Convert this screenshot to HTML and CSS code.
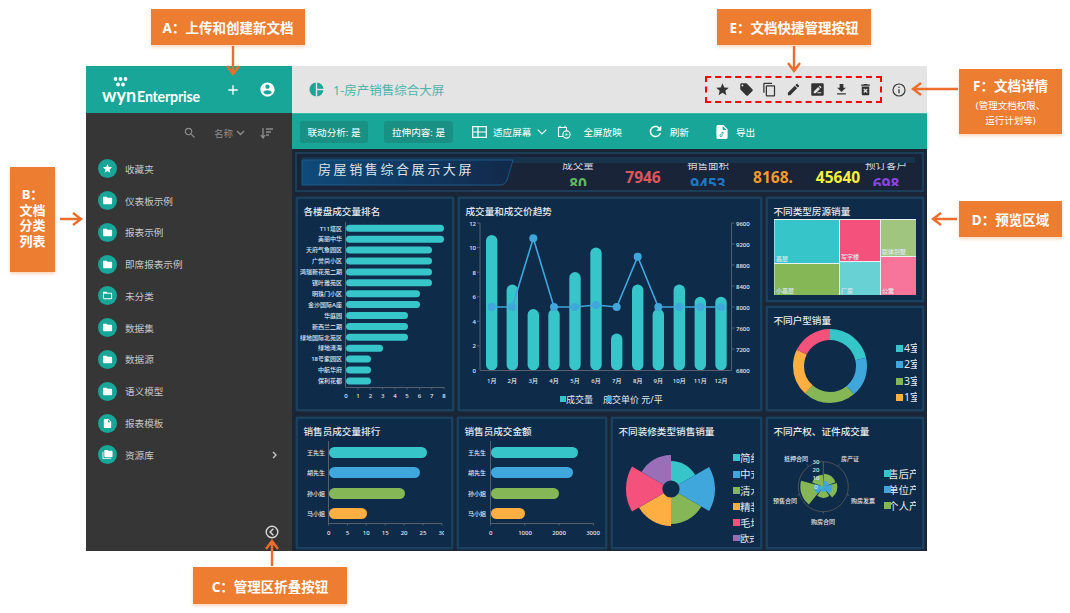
FILE: index.html
```html
<!DOCTYPE html>
<html lang="zh-CN">
<head>
    <meta charset="UTF-8">
    <meta name="viewport" content="width=device-width, initial-scale=1.0">
    <title>文档门户说明</title>
    <link rel="stylesheet" href="styles.css">
</head>
<body>
<svg class="defs" width="0" height="0">
    <symbol id="i-star" viewBox="0 0 24 24"><path d="M12 17.27L18.18 21l-1.64-7.03L22 9.24l-7.19-.61L12 2 9.19 8.63 2 9.24l5.46 4.73L5.82 21z"/></symbol>
    <symbol id="i-folder" viewBox="0 0 24 24"><path d="M10 4H4c-1.1 0-2 .9-2 2v12c0 1.1.9 2 2 2h16c1.1 0 2-.9 2-2V8c0-1.1-.9-2-2-2h-8l-2-2z"/></symbol>
    <symbol id="i-folder-open" viewBox="0 0 24 24"><path d="M20 6h-8l-2-2H4c-1.1 0-1.99.9-1.99 2L2 18c0 1.1.9 2 2 2h16c1.1 0 2-.9 2-2V8c0-1.1-.9-2-2-2zm0 12H4V8h16v10z"/></symbol>
    <symbol id="i-doc" viewBox="0 0 24 24"><path d="M14 2H6c-1.1 0-1.99.9-1.99 2L4 20c0 1.1.89 2 1.99 2H18c1.1 0 2-.9 2-2V8l-6-6zm-1 7V3.5L18.5 9H13z"/></symbol>
    <symbol id="i-folders" viewBox="0 0 24 24"><path d="M3 6H1v14c0 1.1.9 2 2 2h17v-2H3V6zM21 4h-7l-2-2H7c-1.1 0-2 .9-2 2v12c0 1.1.9 2 2 2h14c1.1 0 2-.9 2-2V6c0-1.1-.9-2-2-2z"/></symbol>
</svg>

<div class="app">
    <aside class="sidebar">
        <div class="brand">
            <div class="logo">
                <svg class="logo-dots" width="15" height="10" viewBox="0 0 15 10">
                    <circle cx="2.5" cy="2" r="1.9"/><circle cx="7.5" cy="2" r="1.9"/><circle cx="12.5" cy="2" r="1.9"/>
                    <circle cx="5" cy="7.5" r="1.9"/><circle cx="10" cy="7.5" r="1.9"/>
                </svg>
                <span class="logo-wyn">wyn</span><span class="logo-name">Enterprise</span>
            </div>
            <svg class="brand-add" width="16" height="16" viewBox="0 0 24 24"><path d="M19 13h-6v6h-2v-6H5v-2h6V5h2v6h6v2z"/></svg>
            <svg class="brand-user" width="17" height="17" viewBox="0 0 24 24"><path d="M12 2C6.48 2 2 6.48 2 12s4.48 10 10 10 10-4.48 10-10S17.52 2 12 2zm0 3c1.66 0 3 1.34 3 3s-1.34 3-3 3-3-1.34-3-3 1.34-3 3-3zm0 14.2c-2.5 0-4.71-1.28-6-3.22.03-1.99 4-3.08 6-3.08 1.99 0 5.97 1.09 6 3.08-1.29 1.94-3.5 3.22-6 3.22z"/></svg>
        </div>
        <div class="filter">
            <svg width="14" height="14" viewBox="0 0 24 24"><path d="M15.5 14h-.79l-.28-.27C15.41 12.59 16 11.11 16 9.5 16 5.91 13.09 3 9.5 3S3 5.91 3 9.5 5.91 16 9.5 16c1.61 0 3.09-.59 4.23-1.57l.27.28v.79l5 4.99L20.49 19l-4.99-5zm-6 0C7.01 14 5 11.99 5 9.5S7.01 5 9.5 5 14 7.01 14 9.5 11.99 14 9.5 14z"/></svg>
            <span class="filter-name">名称</span>
            <svg class="filter-chev" width="9" height="6" viewBox="0 0 9 6"><path d="M1 1l3.5 3.5L8 1" fill="none" stroke="#8d8d8d" stroke-width="1.4"/></svg>
            <svg class="filter-sort" width="13" height="11" viewBox="0 0 13 11"><path d="M3 0v9M1 7l2 3 2-3M6 1h7M6 4h5M6 7h3" fill="none" stroke="#8d8d8d" stroke-width="1.3"/></svg>
        </div>
        <ul class="nav">
            <li><span class="nav-dot"><svg><use href="#i-star"/></svg></span>收藏夹</li>
            <li><span class="nav-dot"><svg><use href="#i-folder"/></svg></span>仪表板示例</li>
            <li><span class="nav-dot"><svg><use href="#i-folder"/></svg></span>报表示例</li>
            <li><span class="nav-dot"><svg><use href="#i-folder"/></svg></span>即席报表示例</li>
            <li><span class="nav-dot"><svg><use href="#i-folder-open"/></svg></span>未分类</li>
            <li><span class="nav-dot"><svg><use href="#i-folder"/></svg></span>数据集</li>
            <li><span class="nav-dot"><svg><use href="#i-folder"/></svg></span>数据源</li>
            <li><span class="nav-dot"><svg><use href="#i-folder"/></svg></span>语义模型</li>
            <li><span class="nav-dot"><svg><use href="#i-doc"/></svg></span>报表模板</li>
            <li><span class="nav-dot"><svg><use href="#i-folders"/></svg></span>资源库
                <svg class="nav-more" width="6" height="8" viewBox="0 0 6 8"><path d="M1 1l3 3-3 3" fill="none" stroke="#c8c8c8" stroke-width="1.4"/></svg>
            </li>
        </ul>
        <svg class="collapse" width="14" height="14" viewBox="0 0 14 14"><circle cx="7" cy="7" r="5.8" fill="none" stroke="#d8d8d8" stroke-width="1.4"/><path d="M8.3 3.8L5.1 7l3.2 3.2" fill="none" stroke="#d8d8d8" stroke-width="1.5"/></svg>
    </aside>

    <main class="main">
        <header class="topbar">
            <svg class="doc-icon" width="15" height="15" viewBox="0 0 15 15"><circle cx="7.5" cy="7.5" r="7" fill="#17a697"/><path d="M7.5 0v15M7.5 7.5H15" stroke="#e4e4e4" stroke-width="1.4"/></svg>
            <span class="doc-title">1-房产销售综合大屏</span>
            <div class="quick">
                <svg><use href="#i-star"/></svg>
                <svg viewBox="0 0 24 24"><path d="M21.41 11.58l-9-9C12.05 2.22 11.55 2 11 2H4c-1.1 0-2 .9-2 2v7c0 .55.22 1.05.59 1.42l9 9c.36.36.86.58 1.41.58.55 0 1.05-.22 1.41-.59l7-7c.37-.36.59-.86.59-1.41 0-.55-.23-1.06-.59-1.42zM5.5 7C4.67 7 4 6.33 4 5.5S4.67 4 5.5 4 7 4.67 7 5.5 6.33 7 5.5 7z"/></svg>
                <svg viewBox="0 0 24 24"><path d="M16 1H4c-1.1 0-2 .9-2 2v14h2V3h12V1zm3 4H8c-1.1 0-2 .9-2 2v14c0 1.1.9 2 2 2h11c1.1 0 2-.9 2-2V7c0-1.1-.9-2-2-2zm0 16H8V7h11v14z"/></svg>
                <svg viewBox="0 0 24 24"><path d="M3 17.25V21h3.75L17.81 9.94l-3.75-3.75L3 17.25zM20.71 7.04c.39-.39.39-1.02 0-1.41l-2.34-2.34c-.39-.39-1.02-.39-1.41 0l-1.83 1.83 3.75 3.75 1.83-1.83z"/></svg>
                <svg viewBox="0 0 24 24"><path d="M4 2h16c1.1 0 2 .9 2 2v16c0 1.1-.9 2-2 2H4c-1.1 0-2-.9-2-2V4c0-1.1.9-2 2-2zm2 13v3h3l7-7-3-3-7 7zm11-5l1.5-1.5-3-3L14 7l3 3zM11 18h7v-1.6h-5.4L11 18z" fill-rule="evenodd"/></svg>
                <svg viewBox="0 0 24 24"><path d="M19 9h-4V3H9v6H5l7 7 7-7zM5 18v2h14v-2H5z"/></svg>
                <svg viewBox="0 0 24 24"><path d="M6 19c0 1.1.9 2 2 2h8c1.1 0 2-.9 2-2V7H6v12zm2.46-7.12l1.41-1.41L12 12.59l2.12-2.12 1.41 1.41L13.41 14l2.12 2.12-1.41 1.41L12 15.41l-2.12 2.12-1.41-1.41L10.59 14l-2.13-2.12zM15.5 4l-1-1h-5l-1 1H5v2h14V4z"/></svg>
            </div>
            <svg class="info" width="14" height="14" viewBox="0 0 14 14"><circle cx="7" cy="7" r="6" fill="none" stroke="#3a3a3a" stroke-width="1.2"/><path d="M7 6.2v4M7 3.8v1.3" stroke="#3a3a3a" stroke-width="1.3"/></svg>
        </header>

        <div class="toolbar">
            <span class="pill">联动分析: 是</span>
            <span class="pill pill-next">拉伸内容: 是</span>
            <span class="tool tool-fit">
                <svg width="15" height="12" viewBox="0 0 15 12"><path d="M.7.7h13.6v10.6H.7zM.7 6h13.6M6 .7v10.6" fill="none" stroke="#fff" stroke-width="1.2"/></svg>
                适应屏幕
                <svg width="10" height="6" viewBox="0 0 10 6"><path d="M.7.7L5 5l4.3-4.3" fill="none" stroke="#fff" stroke-width="1.1"/></svg>
            </span>
            <span class="tool tool-full">
                <svg width="14" height="14" viewBox="0 0 14 14"><path d="M6 11.5H1.5V2.5h8v3M3 2.5V.8M8 2.5V.8" fill="none" stroke="#fff" stroke-width="1.1"/><circle cx="9.5" cy="9.5" r="3.6" fill="none" stroke="#fff" stroke-width="1.1"/><path d="M8.6 8v3l2.3-1.5z" fill="#fff"/></svg>
                全屏放映
            </span>
            <span class="tool">
                <svg width="13" height="13" viewBox="3 3 18 18"><path fill="#fff" d="M17.65 6.35C16.2 4.9 14.21 4 12 4c-4.42 0-7.99 3.58-7.99 8s3.57 8 7.99 8c3.73 0 6.84-2.55 7.73-6h-2.08c-.82 2.33-3.04 4-5.65 4-3.31 0-6-2.69-6-6s2.69-6 6-6c1.66 0 3.14.69 4.22 1.78L13 11h7V4l-2.35 2.35z"/></svg>
                刷新
            </span>
            <span class="tool">
                <svg width="12" height="14" viewBox="4 2 16 20"><path fill="#fff" d="M14 2H6c-1.1 0-1.99.9-1.99 2L4 20c0 1.1.89 2 1.99 2H18c1.1 0 2-.9 2-2V8l-6-6zm-1 7V3.5L18.5 9H13z"/><path d="M12 12v5a1.5 1.5 0 1 1-1.5-1.5M12 12.5l2.5 1" fill="none" stroke="#17a697" stroke-width="1.3"/></svg>
                导出
            </span>
        </div>

        <section class="preview">
            <svg class="banner" viewBox="295 152 629 40">
                <defs>
                    <linearGradient id="bannerFill" x1="0" x2="1" y1="0" y2="0"><stop offset="0" stop-color="#0f4a7a"/><stop offset="1" stop-color="#12294a"/></linearGradient>
                    <clipPath id="kpiClip"><rect x="515" y="163" width="400" height="23"/></clipPath>
                </defs>
                <rect x="296" y="153" width="627" height="38" class="banner-frame"/>
                <rect x="302" y="157" width="613" height="6" fill="#17344f"/>
                <path d="M302 160H513L507 180Q505 185 500 185H302Z" fill="url(#bannerFill)" stroke="#1a5a88"/>
                <text x="318" y="174" class="banner-title">房屋销售综合展示大屏</text>
                <g clip-path="url(#kpiClip)">
                    <text x="578" y="169" class="kpi-label">成交量</text>
                    <text x="578" y="190" class="kpi-num" fill="#5fb760">80</text>
                    <text x="643" y="183" class="kpi-num" fill="#e0565c">7946</text>
                    <text x="708" y="169" class="kpi-label">销售面积</text>
                    <text x="708" y="190" class="kpi-num" fill="#1e78c8">9453</text>
                    <text x="773" y="183" class="kpi-num" fill="#f39a2b">8168.</text>
                    <text x="838" y="183" class="kpi-num" fill="#f6f03c">45640</text>
                    <text x="886" y="169" class="kpi-label">预订客户</text>
                    <text x="886" y="190" class="kpi-num" fill="#8a46e0">698</text>
                </g>
            </svg>

            <div class="row-top">
                <div class="panel">
                    <h3>各楼盘成交量排名</h3>
                    <svg class="plot" viewBox="298 219 154 190">
                        <g class="bars-teal">
                            <rect x="346" y="224.8" width="98" height="7" rx="3.5"/><rect x="346" y="235.7" width="98" height="7" rx="3.5"/>
                            <rect x="346" y="246.6" width="86" height="7" rx="3.5"/><rect x="346" y="257.5" width="86" height="7" rx="3.5"/>
                            <rect x="346" y="268.4" width="86" height="7" rx="3.5"/><rect x="346" y="279.3" width="86" height="7" rx="3.5"/>
                            <rect x="346" y="290.2" width="74" height="7" rx="3.5"/><rect x="346" y="301.1" width="74" height="7" rx="3.5"/>
                            <rect x="346" y="312" width="62" height="7" rx="3.5"/><rect x="346" y="322.9" width="62" height="7" rx="3.5"/>
                            <rect x="346" y="333.8" width="62" height="7" rx="3.5"/><rect x="346" y="344.7" width="37" height="7" rx="3.5"/>
                            <rect x="346" y="355.6" width="25" height="7" rx="3.5"/><rect x="346" y="366.5" width="25" height="7" rx="3.5"/>
                            <rect x="346" y="377.4" width="25" height="7" rx="3.5"/>
                        </g>
                        <path class="axis" d="M345.5 222V387.5H444M358 387.5v2M370.3 387.5v2M382.6 387.5v2M394.9 387.5v2M407.2 387.5v2M419.5 387.5v2M431.8 387.5v2M444 387.5v2"/>
                        <g class="lbl-end">
                            <text x="342" y="230.5">T11塔区</text><text x="342" y="241.4">美丽中华</text><text x="342" y="252.3">天府气象园区</text>
                            <text x="342" y="263.2">广誉尚小区</text><text x="342" y="274.1">鸿瑞新花苑二期</text><text x="342" y="285">锦叶雅苑区</text>
                            <text x="342" y="295.9">明珠门小区</text><text x="342" y="306.8">金沙国际A座</text><text x="342" y="317.7">华庭园</text>
                            <text x="342" y="328.6">新西兰二期</text><text x="342" y="339.5">绿地国际北苑区</text><text x="342" y="350.4">绿地湾海</text>
                            <text x="342" y="361.3">18号家园区</text><text x="342" y="372.2">中航华府</text><text x="342" y="383.1">保利花都</text>
                        </g>
                        <g class="lbl-mid">
                            <text x="346" y="398">0</text><text x="358" y="398">1</text><text x="370.5" y="398">2</text><text x="382.6" y="398">3</text><text x="395" y="398">4</text>
                            <text x="407" y="398">5</text><text x="419.5" y="398">6</text><text x="431.8" y="398">7</text><text x="444" y="398">8</text>
                        </g>
                    </svg>
                </div>

                <div class="panel">
                    <h3>成交量和成交价趋势</h3>
                    <svg class="plot" viewBox="460 219 300 190">
                        <g class="bars-teal">
                            <rect x="486" y="235" width="11.4" height="135.5" rx="5.7"/><rect x="506.6" y="284.5" width="11.4" height="86" rx="5.7"/>
                            <rect x="527.6" y="309" width="11.4" height="61.5" rx="5.7"/><rect x="548.3" y="309" width="11.4" height="61.5" rx="5.7"/>
                            <rect x="569.3" y="272" width="11.4" height="98.5" rx="5.7"/><rect x="590.3" y="247.5" width="11.4" height="123" rx="5.7"/>
                            <rect x="611" y="333.6" width="11.4" height="36.9" rx="5.7"/><rect x="632" y="284.5" width="11.4" height="86" rx="5.7"/>
                            <rect x="652.6" y="309" width="11.4" height="61.5" rx="5.7"/><rect x="673.6" y="284.5" width="11.4" height="86" rx="5.7"/>
                            <rect x="694.6" y="296.8" width="11.4" height="73.7" rx="5.7"/><rect x="715.3" y="296.8" width="11.4" height="73.7" rx="5.7"/>
                        </g>
                        <path class="axis" d="M480 223V370.5H731.5V223M477 223h3M477 247.6h3M477 272.2h3M477 296.8h3M477 321.3h3M477 345.9h3M731.5 223h3M731.5 244h3M731.5 265h3M731.5 286h3M731.5 307h3M731.5 328h3M731.5 349h3"/>
                        <polyline class="line" points="491.7,307 512.3,307 533.3,238.3 554,307 575,307 596,305 616.7,307 637.7,256.7 658.3,307 679.3,307 700.3,307 721,307"/>
                        <g class="dots">
                            <circle cx="491.7" cy="307" r="4"/><circle cx="512.3" cy="307" r="4"/><circle cx="533.3" cy="238.3" r="4"/><circle cx="554" cy="307" r="4"/>
                            <circle cx="575" cy="307" r="4"/><circle cx="596" cy="305" r="4"/><circle cx="616.7" cy="307" r="4"/><circle cx="637.7" cy="256.7" r="4"/>
                            <circle cx="658.3" cy="307" r="4"/><circle cx="679.3" cy="307" r="4"/><circle cx="700.3" cy="307" r="4"/><circle cx="721" cy="307" r="4"/>
                        </g>
                        <g class="lbl-end">
                            <text x="476" y="225.5">12</text><text x="476" y="250">10</text><text x="476" y="274.7">8</text><text x="476" y="299.3">6</text>
                            <text x="476" y="323.8">4</text><text x="476" y="348.4">2</text><text x="476" y="373">0</text>
                        </g>
                        <g class="lbl-start">
                            <text x="736" y="225.5">9600</text><text x="736" y="246.5">9200</text><text x="736" y="267.5">8800</text><text x="736" y="288.5">8400</text>
                            <text x="736" y="309.5">8000</text><text x="736" y="330.5">7600</text><text x="736" y="351.5">7200</text><text x="736" y="373">6800</text>
                        </g>
                        <g class="lbl-mid">
                            <text x="491.7" y="383">1月</text><text x="512.3" y="383">2月</text><text x="533.3" y="383">3月</text><text x="554" y="383">4月</text>
                            <text x="575" y="383">5月</text><text x="596" y="383">6月</text><text x="616.7" y="383">7月</text><text x="637.7" y="383">8月</text>
                            <text x="658.3" y="383">9月</text><text x="679.3" y="383">10月</text><text x="700.3" y="383">11月</text><text x="721" y="383">12月</text>
                        </g>
                        <rect x="560" y="396" width="6" height="6" fill="#36c6c9"/>
                        <text x="566" y="403" class="legend-sm">成交量</text>
                        <text x="603" y="403" class="legend-sm">成交单价 元/平</text>
                        <circle cx="609" cy="399" r="3" fill="#3fa7dc"/>
                    </svg>
                </div>

                <div class="stack">
                    <div class="panel">
                        <h3>不同类型房源销量</h3>
                        <svg class="plot" viewBox="768 219 154 81">
                            <rect x="774" y="219" width="142" height="76" fill="#e8f2f2"/>
                            <rect x="774.5" y="220" width="64.5" height="43" fill="#36c6c9"/>
                            <rect x="840" y="220" width="40" height="41" fill="#f4527c"/>
                            <rect x="881" y="220" width="35" height="36" fill="#a0c57e"/>
                            <rect x="774.5" y="264" width="64.5" height="31" fill="#86b757"/>
                            <rect x="840" y="262" width="40" height="33" fill="#67d1d4"/>
                            <rect x="881" y="257" width="35" height="38" fill="#f7749b"/>
                            <g class="lbl-start">
                                <text x="776" y="261">高层</text><text x="841" y="259">写字楼</text><text x="882" y="254">联体别墅</text>
                                <text x="776" y="293">小高层</text><text x="841" y="293">厂房</text><text x="882" y="293">公寓</text>
                            </g>
                        </svg>
                    </div>
                    <div class="panel">
                        <h3>不同户型销量</h3>
                        <svg class="plot" viewBox="768 328 154 81">
                            <defs><clipPath id="unitClip"><rect x="768" y="328" width="149" height="81"/></clipPath></defs>
                            <g transform="rotate(-90 830 366)" fill="none" stroke-width="11">
                                <circle cx="830" cy="366" r="31.5" pathLength="360" stroke="#36c6c9" stroke-dasharray="77 283"/>
                                <circle cx="830" cy="366" r="31.5" pathLength="360" stroke="#3fa7dc" stroke-dasharray="63 297" stroke-dashoffset="-77"/>
                                <circle cx="830" cy="366" r="31.5" pathLength="360" stroke="#86b757" stroke-dasharray="82 278" stroke-dashoffset="-140"/>
                                <circle cx="830" cy="366" r="31.5" pathLength="360" stroke="#ffae42" stroke-dasharray="74 286" stroke-dashoffset="-222"/>
                                <circle cx="830" cy="366" r="31.5" pathLength="360" stroke="#f4527c" stroke-dasharray="64 296" stroke-dashoffset="-296"/>
                            </g>
                            <g clip-path="url(#unitClip)" class="legend">
                                <rect x="896" y="345" width="7" height="7" fill="#36c6c9"/><text x="904" y="352">4室</text>
                                <rect x="896" y="361" width="7" height="7" fill="#3fa7dc"/><text x="904" y="368">2室</text>
                                <rect x="896" y="378" width="7" height="7" fill="#86b757"/><text x="904" y="385">3室</text>
                                <rect x="896" y="394" width="7" height="7" fill="#ffae42"/><text x="904" y="401">1室</text>
                            </g>
                        </svg>
                    </div>
                </div>
            </div>

            <div class="row-bottom">
                <div class="panel">
                    <h3>销售员成交量排行</h3>
                    <svg class="plot" viewBox="298 439 153 108">
                        <defs><clipPath id="tickClip"><rect x="298" y="525" width="146" height="14"/></clipPath></defs>
                        <rect x="329" y="447" width="98" height="11" rx="5.5" fill="#36c6c9"/>
                        <rect x="329" y="467" width="91" height="11" rx="5.5" fill="#3fa7dc"/>
                        <rect x="329" y="488" width="76" height="11" rx="5.5" fill="#86b757"/>
                        <rect x="329" y="508" width="38" height="11" rx="5.5" fill="#ffae42"/>
                        <path class="axis" d="M328.5 441V523.5H442M328.5 523.5v2M347.4 523.5v2M366.3 523.5v2M385.2 523.5v2M404.1 523.5v2M423 523.5v2M442 523.5v2"/>
                        <g class="lbl-end">
                            <text x="325" y="455">王先生</text><text x="325" y="475">胡先生</text><text x="325" y="496">孙小姐</text><text x="325" y="516">马小姐</text>
                        </g>
                        <g class="lbl-mid" clip-path="url(#tickClip)">
                            <text x="328.7" y="535">0</text><text x="347.4" y="535">5</text><text x="366.3" y="535">10</text><text x="385.2" y="535">15</text><text x="404.1" y="535">20</text><text x="423" y="535">25</text><text x="442" y="535">30</text>
                        </g>
                    </svg>
                </div>
                <div class="panel">
                    <h3>销售员成交金额</h3>
                    <svg class="plot" viewBox="459 439 146 108">
                        <rect x="491" y="447" width="87" height="11" rx="5.5" fill="#36c6c9"/>
                        <rect x="491" y="467" width="82" height="11" rx="5.5" fill="#3fa7dc"/>
                        <rect x="491" y="488" width="68" height="11" rx="5.5" fill="#86b757"/>
                        <rect x="491" y="508" width="34" height="11" rx="5.5" fill="#ffae42"/>
                        <path class="axis" d="M490.5 441V523.5H593.5M490.5 523.5v2M524.7 523.5v2M559 523.5v2M593.5 523.5v2"/>
                        <g class="lbl-end">
                            <text x="486" y="455">王先生</text><text x="486" y="475">胡先生</text><text x="486" y="496">孙小姐</text><text x="486" y="516">马小姐</text>
                        </g>
                        <g class="lbl-mid">
                            <text x="490.7" y="535">0</text><text x="525" y="535">1000</text><text x="559" y="535">2000</text><text x="593" y="535">3000</text>
                        </g>
                    </svg>
                </div>
                <div class="panel">
                    <h3>不同装修类型销售销量</h3>
                    <svg class="plot" viewBox="613 439 147 108">
                        <defs><clipPath id="decoClip"><rect x="613" y="439" width="141" height="108"/></clipPath></defs>
                        <path d="M671 489V461A28 28 0 0 1 695.2 475Z" fill="#36c6c9"/>
                        <path d="M671 489L709.1 467A44 44 0 0 1 709.1 511Z" fill="#3fa7dc"/>
                        <path d="M671 489L701.3 506.5A35 35 0 0 1 671 524Z" fill="#86b757"/>
                        <path d="M671 489V526A37 37 0 0 1 639 507.5Z" fill="#ffae42"/>
                        <path d="M671 489L632 511.5A45 45 0 0 1 632 466.5Z" fill="#f4527c"/>
                        <path d="M671 489L641.6 472A34 34 0 0 1 671 455Z" fill="#9b6fb8"/>
                        <circle cx="671" cy="489" r="8.6" class="hole"/>
                        <g clip-path="url(#decoClip)" class="legend">
                            <rect x="733" y="454" width="7" height="7" fill="#36c6c9"/><text x="740" y="462">简约</text>
                            <rect x="733" y="471" width="7" height="7" fill="#3fa7dc"/><text x="740" y="478">中式</text>
                            <rect x="733" y="487" width="7" height="7" fill="#86b757"/><text x="740" y="495">清水</text>
                            <rect x="733" y="503" width="7" height="7" fill="#ffae42"/><text x="740" y="511">精装</text>
                            <rect x="733" y="519" width="7" height="7" fill="#f4527c"/><text x="740" y="527">毛坯</text>
                            <rect x="733" y="535" width="7" height="6" fill="#9b6fb8"/><text x="740" y="542" class="legend-sm">欧式</text>
                        </g>
                    </svg>
                </div>
                <div class="panel">
                    <h3>不同产权、证件成交量</h3>
                    <svg class="plot" viewBox="768 439 154 108">
                        <defs><clipPath id="rightClip"><rect x="768" y="439" width="148" height="108"/></clipPath></defs>
                        <circle cx="823.3" cy="486.7" r="25" class="ring"/>
                        <path class="axis" d="M823.3 486.7V461.7M838 466.5l1.5-2M847 494.5l2 .6M823.3 511.7v2M799.5 494.5l-2 .6M808.6 466.5l-1.5-2"/>
                        <g transform="translate(823.3 486.7)" fill="none">
                            <circle r="6.5" stroke-width="13" pathLength="360" stroke="#86b757" stroke-dasharray="66 294" transform="rotate(-87)"/>
                            <circle r="7" stroke-width="14" pathLength="360" stroke="#86b757" stroke-dasharray="66 294" transform="rotate(-15)"/>
                            <circle r="5.5" stroke-width="11" pathLength="360" stroke="#86b757" stroke-dasharray="66 294" transform="rotate(57)"/>
                            <circle r="11.5" stroke-width="23" pathLength="360" stroke="#86b757" stroke-dasharray="66 294" transform="rotate(129)"/>
                            <circle r="6" stroke-width="12" pathLength="360" stroke="#86b757" stroke-dasharray="66 294" transform="rotate(201)"/>
                            <circle r="3" stroke-width="6" pathLength="360" stroke="#3fa7dc" stroke-dasharray="66 294" transform="rotate(-87)"/>
                            <circle r="4.5" stroke-width="9" pathLength="360" stroke="#3fa7dc" stroke-dasharray="66 294" transform="rotate(-15)"/>
                            <circle r="2.5" stroke-width="5" pathLength="360" stroke="#3fa7dc" stroke-dasharray="66 294" transform="rotate(57)"/>
                            <circle r="4.5" stroke-width="9" pathLength="360" stroke="#3fa7dc" stroke-dasharray="66 294" transform="rotate(129)"/>
                            <circle r="1.5" stroke-width="3" pathLength="360" stroke="#36c6c9" stroke-dasharray="66 294" transform="rotate(129)"/>
                        </g>
                        <g class="lbl-mid">
                            <text x="816" y="464">30</text><text x="816" y="472">20</text><text x="816" y="480">10</text><text x="816" y="489">0</text>
                            <text x="796" y="461">抵押合同</text><text x="850" y="461">房产证</text><text x="863" y="503">购房发票</text>
                            <text x="823" y="524">购房合同</text><text x="785" y="503">预售合同</text>
                        </g>
                        <g clip-path="url(#rightClip)" class="legend">
                            <text x="888" y="478">售后产权</text><rect x="884" y="470" width="7" height="7" fill="#36c6c9"/>
                            <text x="888" y="494">单位产权</text><rect x="884" y="486" width="7" height="7" fill="#3fa7dc"/>
                            <text x="888" y="510">个人产权</text><rect x="884" y="502" width="7" height="7" fill="#86b757"/>
                        </g>
                    </svg>
                </div>
            </div>
        </section>
    </main>
</div>

<!-- callouts sit on top of the screenshot -->
<div class="note note-a">A：上传和创建新文档</div>
<div class="note note-e">E：文档快捷管理按钮</div>
<div class="note note-f">F：文档详情<small>(管理文档权限、<br>运行计划等)</small></div>
<div class="note note-d">D：预览区域</div>
<div class="note note-b">B：<br>文档<br>分类<br>列表</div>
<div class="note note-c">C：管理区折叠按钮</div>

<svg class="arrows" width="1070" height="613" viewBox="0 0 1070 613">
    <path d="M233 46V74M227 66l6 8 6-8"/>
    <path d="M794 46V71M788 63l6 8 6-8"/>
    <path d="M958 89H913M921 83l-8 6 8 6"/>
    <path d="M957 219H933M941 213l-8 6 8 6"/>
    <path d="M60 219H81M73 213l8 6-8 6"/>
    <path d="M272 566V541M266 549l6-8 6 8"/>
</svg>
</body>
</html>
```

FILE: styles.css
```css
* { box-sizing: border-box; }
html, body { margin: 0; padding: 0; }
body {
    position: relative;
    width: 1070px;
    height: 613px;
    overflow: hidden;
    background: #fff;
    font-family: "Noto Sans", "Noto Sans CJK SC", sans-serif;
}
.defs { position: absolute; }

.app { display: flex; width: 841px; height: 485px; margin: 66px 0 0 86px; }

/* left column */
.sidebar { display: flex; flex-direction: column; width: 206px; background: #363636; color: #c6c6c6; font-size: 9.6px; }
.brand { display: flex; align-items: center; height: 47px; background: #17a697; fill: #fff; padding-left: 16px; }
.logo { position: relative; display: flex; align-items: baseline; width: 95px; color: #fff; font-family: Lato, sans-serif; padding-top: 6px; }
.logo-dots { position: absolute; left: 11px; top: 4px; fill: #fff; }
.logo-wyn { font-size: 18px; font-weight: 700; margin-top: 5px; }
.logo-name { font-size: 14.2px; font-weight: 700; margin-left: 1px; letter-spacing: -.2px; }
.brand-add { margin-left: 28px; }
.brand-user { margin-left: 18px; }

.filter { display: flex; align-items: center; height: 40px; padding-left: 97px; fill: #8d8d8d; color: #8d8d8d; }
.filter-name { margin-left: 17px; }
.filter-chev { margin-left: 3px; }
.filter-sort { margin-left: 15px; }

.nav { list-style: none; margin: 0; padding: 0; }
.nav li { display: flex; align-items: center; height: 31.78px; padding-left: 12px; }
.nav-dot { display: flex; align-items: center; justify-content: center; width: 19px; height: 19px; margin-right: 8px; border-radius: 50%; background: #17a697; }
.nav-dot svg { width: 11px; height: 11px; fill: #fff; }
.nav-more { margin-left: auto; margin-right: 14px; }
.collapse { margin: auto 0 12px 179px; }

/* top row of the main area */
.main { display: flex; flex-direction: column; width: 635px; }
.topbar { display: flex; align-items: center; height: 47px; padding-left: 17px; background: #e4e4e4; }
.doc-title { margin-left: 9px; color: #4fb3a8; font-size: 12.5px; }
.quick { display: flex; align-items: center; gap: 8.8px; height: 27px; margin-left: auto; padding: 0 7.5px; border: 2px dashed #f00; fill: #333; }
.quick svg { width: 15px; height: 15px; }
.info { margin: 0 21px 0 10px; }

.toolbar { display: flex; align-items: center; height: 36px; padding-left: 8px; background: #17a697; border-top: 1px solid #3cb9ab; color: #fff; font-size: 9.6px; }
.pill { display: flex; align-items: center; justify-content: center; width: 68px; height: 22px; border-radius: 3px; background: #1a8f83; }
.pill-next { width: 69px; margin-left: 16px; }
.tool { display: flex; align-items: center; gap: 8px; margin-left: 27px; }
.tool-fit { gap: 6px; margin-left: 19px; }
.tool-full { gap: 12px; margin-left: 10px; }

/* dashboard preview */
.preview { display: flex; flex-direction: column; height: 402px; padding: 3px 3px 0 4px; background: #1a2536; }
.banner { display: block; width: 629px; height: 40px; margin: 0 0 5px -1px; }
.banner-frame { fill: #1a2438; stroke: #1b3d57; stroke-width: 2; }
.banner-title { fill: #dde4ea; font-size: 13px; letter-spacing: 2.6px; }
.kpi-label { fill: #d5dbe2; font-size: 10.5px; text-anchor: middle; }
.kpi-num { font-size: 15.5px; font-weight: 700; text-anchor: middle; }

.row-top { display: grid; grid-template-columns: 158px 304px 158px; gap: 4px; height: 214px; }
.row-bottom { display: grid; grid-template-columns: 157px 150px 151px 158px; gap: 4px; height: 132px; margin-top: 6px; }
.stack { display: grid; grid-template-rows: 105px 105px; gap: 4px; }
.panel { min-width: 0; background: #0e2b4a; border: 2px solid #1a4060; box-shadow: 0 0 2px #1f4765; }
.panel h3 { height: 20px; margin: 0; padding: 6px 0 0 5.5px; color: #e4e9ed; font-size: 9.6px; font-weight: 500; line-height: 13px; white-space: nowrap; }
.plot { display: block; width: 100%; height: calc(100% - 20px); }

.plot text { font-family: "Noto Sans", "Noto Sans CJK SC", sans-serif; }
.lbl-end text, .lbl-mid text, .lbl-start text { fill: #e4e8ec; font-size: 6px; font-weight: 500; }
.lbl-end text { text-anchor: end; }
.lbl-mid text { text-anchor: middle; }
.legend text { fill: #e4e8ec; font-size: 10.5px; }
.plot .legend-sm { fill: #e4e8ec; font-size: 9px; }
.axis { fill: none; stroke: #55606c; stroke-width: 1; }
.ring { fill: none; stroke: #4a4f55; stroke-width: 1; }
.bars-teal { fill: #36c6c9; }
.line { fill: none; stroke: #3fa7dc; stroke-width: 1.6; }
.dots { fill: #3fa7dc; }
.hole { fill: #0e2b4a; }

/* orange callouts */
.note { position: absolute; display: flex; flex-direction: column; align-items: center; justify-content: center; background: #ed7d31; color: #fff; font-size: 13.5px; font-weight: 700; box-shadow: 0 2px 3px rgba(237, 125, 49, .3); white-space: nowrap; }
.note small { margin-top: 3px; font-size: 9.5px; font-weight: 400; line-height: 15px; text-align: center; }
.note-a { left: 151px; top: 9px; width: 154px; height: 36px; }
.note-e { left: 717px; top: 9px; width: 154px; height: 36px; }
.note-f { left: 959px; top: 69px; width: 103px; height: 65px; }
.note-d { left: 959px; top: 201px; width: 103px; height: 36px; }
.note-b { display: block; left: 10px; top: 167px; width: 45px; height: 105px; padding-top: 20px; font-size: 13px; line-height: 15.5px; text-align: center; }
.note-c { left: 193px; top: 567px; width: 154px; height: 37px; }

.arrows { position: absolute; left: 0; top: 0; fill: none; stroke: #ed6d2d; stroke-width: 2.4; pointer-events: none; }
```
